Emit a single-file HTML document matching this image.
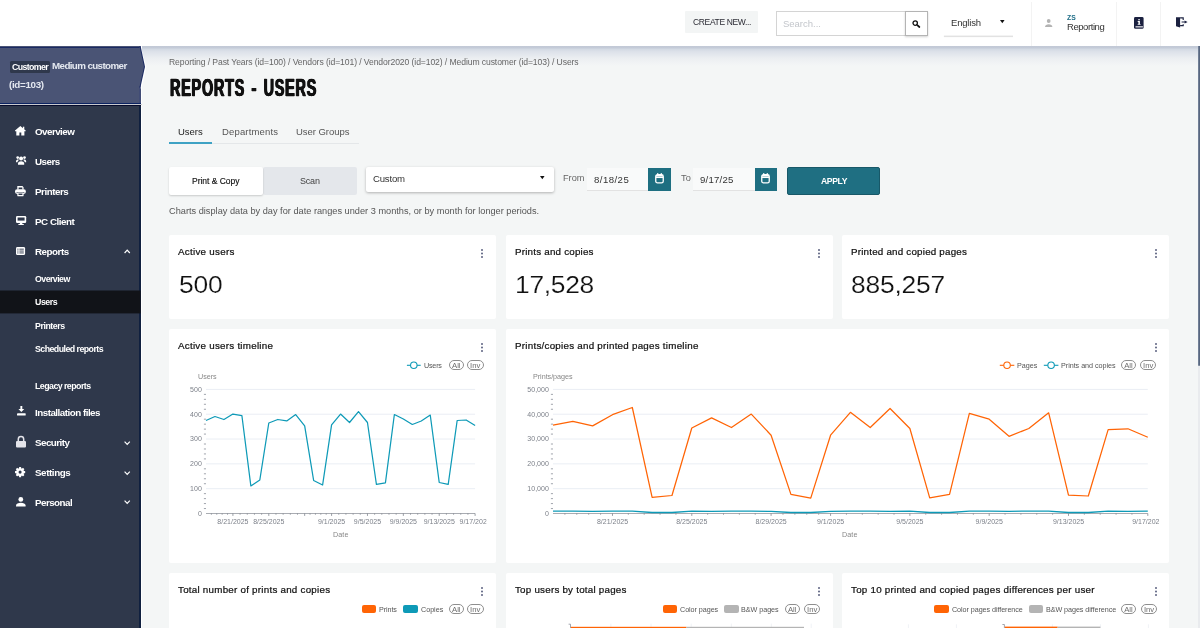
<!DOCTYPE html>
<html><head><meta charset="utf-8"><title>Reports - Users</title>
<style>
*{box-sizing:border-box;margin:0;padding:0}
html,body{width:1200px;height:628px;overflow:hidden;background:#f4f6f6;font-family:"Liberation Sans",sans-serif;color:#222}
.a{position:absolute}
.t{position:absolute;white-space:nowrap;z-index:10;will-change:transform}
.card{position:absolute;background:#fff;border-radius:2px}
.dots{position:absolute;width:2px;height:2px;background:#5c6280;border-radius:1px;box-shadow:0 3.55px 0 #5c6280,0 7.1px 0 #5c6280}
.pill{position:absolute;height:10.4px;border:.9px solid #8e8e8e;border-radius:5.2px;font-size:7.7px;line-height:9.4px;color:#6c6c6c;text-align:center;z-index:10;will-change:transform}
.sw{position:absolute;width:14.5px;height:8px;border-radius:2px}
svg{position:absolute;overflow:visible}
svg.c{will-change:transform}
</style></head><body>
<div class="a" style="left:0;top:45.7px;width:1200px;height:20px;background:linear-gradient(#c2c9d6 0,#c4cbd8 2px,#d2d9e3 3px,#dce1e9 5.5px,#e3e7ed 8.5px,#ebeef1 12px,#f0f2f4 16px,#f4f6f6 20px)"></div>
<div class="a" style="left:0;top:0;width:1200px;height:46px;background:#fff"></div>
<div class="a" style="left:684.8px;top:10.8px;width:73.6px;height:22.4px;background:#f3f5f5;border-radius:1px"></div>
<div class="a" style="left:776.2px;top:11px;width:130px;height:25px;border:1px solid #d4d4d4;background:#fff"></div>
<div class="a" style="left:905.4px;top:11px;width:23.1px;height:25px;border:1px solid #b4b4b4;background:#fff;box-shadow:0 1px 2px rgba(0,0,0,.18)"></div>
<svg style="left:911.6px;top:19.7px" width="8.4" height="7.8" viewBox="0 0 8.4 7.8"><circle cx="3.2" cy="3.1" r="2.2" fill="none" stroke="#111" stroke-width="1.3"/><path d="M5 4.9 L7.4 7" stroke="#111" stroke-width="1.7" stroke-linecap="round"/></svg>
<svg style="left:0;top:0" width="1200" height="46"><rect x="943.9" y="35.6" width="69.1" height="1.5" fill="#e2e2e2"/></svg>
<svg style="left:999.6px;top:20.2px" width="4.6" height="3.2" viewBox="0 0 4.6 3.2"><path d="M0 0h4.6L2.3 3.2z" fill="#111"/></svg>
<div class="a" style="left:1030.7px;top:2px;width:1px;height:44px;background:#f3f3f3"></div>
<div class="a" style="left:1116.1px;top:2px;width:1px;height:44px;background:#f3f3f3"></div>
<div class="a" style="left:1160.1px;top:2px;width:1px;height:44px;background:#f3f3f3"></div>
<svg style="left:1044.9px;top:19px" width="7.4" height="8" viewBox="0 0 7.4 8"><circle cx="3.7" cy="2" r="1.9" fill="#b3b3b3"/><path d="M0 8 C0 4.2 7.4 4.2 7.4 8Z" fill="#b3b3b3"/></svg>
<svg style="left:1133.7px;top:16.9px" width="9.6" height="11.8" viewBox="0 0 9.6 11.8"><rect width="9.6" height="11.8" rx="1.4" fill="#1b2140"/><rect x="1.5" y="9.3" width="7.4" height="1.1" fill="#fff"/><rect x="4.3" y="2.1" width="1.5" height="1.2" fill="#fff"/><path d="M3.7 4.1H5.9V7H6.5V7.8H3.7V7H4.4V4.9H3.7Z" fill="#fff"/></svg>
<svg style="left:1175.5px;top:17.3px" width="11.6" height="10.5" viewBox="0 0 11.6 10.5"><path d="M0 .3H4.1V10.5L0 9.3Z" fill="#1b2140"/><path d="M4.1 .9H7.2V2.9M4.1 8.6H7.2V7.2" fill="none" stroke="#1b2140" stroke-width="1.15"/><path d="M5.6 5H9.2" stroke="#1b2140" stroke-width="1"/><path d="M8.6 3.4L11.6 5 8.6 6.6Z" fill="#1b2140"/></svg>
<div class="a" style="left:0;top:46px;width:141.8px;height:582px;background:#fff"></div>
<div class="a" style="left:0;top:46px;width:140.6px;height:582px;background:#10203f"></div>
<div class="a" style="left:0;top:46px;width:139.3px;height:582px;background:#2f384b"></div>
<div class="a" style="left:0;top:46px;width:140.6px;height:57px;background:#414c76"></div>
<div class="a" style="left:0;top:46px;width:139.3px;height:57px;background:#4a5475"></div>
<div class="a" style="left:0;top:46.6px;width:140.6px;height:1px;background:#1a2a62"></div>
<div class="a" style="left:0;top:102.7px;width:140.6px;height:1.2px;background:#0c2361"></div>
<div class="a" style="left:0;top:103.9px;width:141.8px;height:1.5px;background:#c8c9ce"></div>
<div class="a" style="left:0;top:105.4px;width:140.6px;height:.8px;background:#070c2c"></div>
<svg style="left:0;top:0" width="150" height="110"><path d="M140.6 46L146.3 66.7 141.6 88.5H140.6Z" fill="#fff"/><path d="M139.3 46.6H140.7L145 66.7 140.4 87.4H139.3Z" fill="#1a2a62"/><path d="M139 47.6H139.8L144 66.7 139.6 86.4H139Z" fill="#4a5475"/></svg>
<div class="a" style="left:9.6px;top:60.6px;width:40.6px;height:12px;background:#2f384c;border-radius:1.5px"></div>
<svg style="left:0;top:0" width="150" height="628"><rect x="0" y="290.5" width="140.6" height="22.9" fill="#111318"/></svg>
<svg style="left:15.3px;top:125.8px" width="10.7" height="9.6" viewBox="0 0 10.7 9.6"><path d="M5.35 0L10.7 4.6V5.2H9.4V9.6H6.3V6.6H4.4V9.6H1.3V5.2H0V4.6Z" fill="#fff"/><rect x="7.9" y=".7" width="1.4" height="2.6" fill="#fff"/></svg>
<svg style="left:15.8px;top:156.3px" width="10.2" height="8.7" viewBox="0 0 10.2 8.7"><circle cx="5.1" cy="2.4" r="2" fill="#fff"/><path d="M2 8.7V7.6C2 4.6 8.2 4.6 8.2 7.6V8.7Z" fill="#fff"/><circle cx="1.7" cy="1.6" r="1.35" fill="#fff"/><circle cx="8.5" cy="1.6" r="1.35" fill="#fff"/><path d="M0 6.2V5.4C0 3.4 2.4 3.3 3 3.9C1.9 4.7 1.5 5.4 1.4 6.2Z" fill="#fff"/><path d="M10.2 6.2V5.4C10.2 3.4 7.8 3.3 7.2 3.9C8.3 4.7 8.7 5.4 8.8 6.2Z" fill="#fff"/></svg>
<svg style="left:14.5px;top:186.3px" width="10.9" height="10.2" viewBox="0 0 10.9 10.2"><path d="M2.3 0H7.4L8.6 1.2V3.4H7.3V1.4H3.6V3.4H2.3Z" fill="#fff"/><rect x="0" y="3.3" width="10.9" height="4.6" rx="2.1" fill="#fff"/><rect x="2.3" y="6.4" width="6.3" height="3.8" rx=".4" fill="#fff"/><rect x="3.5" y="7.3" width="3.9" height="1.7" fill="#2f384c"/><rect x="1.6" y="6.2" width="7.7" height=".9" fill="#2f384c"/><rect x="2.3" y="6.6" width="6.3" height=".8" fill="#fff"/></svg>
<svg style="left:15.8px;top:215.9px" width="10.2" height="9.1" viewBox="0 0 10.2 9.1"><rect x="0" y="0" width="10.2" height="7" rx="1.2" fill="#fff"/><rect x="1.6" y="1.5" width="7" height="3.1" fill="#2f384c"/><path d="M4 7H6.2L6.5 8.1H7.8V9.1H2.4V8.1H3.7Z" fill="#fff"/></svg>
<svg style="left:16.3px;top:246.9px" width="9.1" height="8.1" viewBox="0 0 9.1 8.1"><rect width="9.1" height="8.1" rx="1.4" fill="#fff"/><g fill="#2f384c"><rect x="1.3" y="1.7" width="1.2" height=".9"/><rect x="3.4" y="1.7" width="4.4" height=".9"/><rect x="1.3" y="3.6" width="1.2" height=".9"/><rect x="3.4" y="3.6" width="4.4" height=".9"/><rect x="1.3" y="5.5" width="1.2" height=".9"/><rect x="3.4" y="5.5" width="4.4" height=".9"/></g></svg>
<svg style="left:17.3px;top:406.3px" width="8.7" height="9.4" viewBox="0 0 8.7 9.4"><path d="M3.4 0H5.3V3H7.3L4.35 6 1.4 3H3.4Z" fill="#fff"/><rect x="0" y="7.2" width="8.7" height="2.2" rx=".5" fill="#fff"/></svg>
<svg style="left:16px;top:435.7px" width="10" height="11.5" viewBox="0 0 10 11.5"><path d="M2.3 5V3.3A2.7 2.7 0 0 1 7.7 3.3V5" fill="none" stroke="#e4e4ea" stroke-width="1.5"/><rect x="0" y="4.9" width="10" height="6.6" rx="1.1" fill="#e4e4ea"/></svg>
<svg style="left:15px;top:467px" width="10.2" height="10.2" viewBox="-5.1 -5.1 10.2 10.2"><circle r="3.9" fill="#fff"/><rect x="-1.05" y="-5.1" width="2.1" height="2.2" rx=".3" transform="rotate(0)" fill="#fff"/><rect x="-1.05" y="-5.1" width="2.1" height="2.2" rx=".3" transform="rotate(45)" fill="#fff"/><rect x="-1.05" y="-5.1" width="2.1" height="2.2" rx=".3" transform="rotate(90)" fill="#fff"/><rect x="-1.05" y="-5.1" width="2.1" height="2.2" rx=".3" transform="rotate(135)" fill="#fff"/><rect x="-1.05" y="-5.1" width="2.1" height="2.2" rx=".3" transform="rotate(180)" fill="#fff"/><rect x="-1.05" y="-5.1" width="2.1" height="2.2" rx=".3" transform="rotate(225)" fill="#fff"/><rect x="-1.05" y="-5.1" width="2.1" height="2.2" rx=".3" transform="rotate(270)" fill="#fff"/><rect x="-1.05" y="-5.1" width="2.1" height="2.2" rx=".3" transform="rotate(315)" fill="#fff"/><circle r="1.55" fill="#2f384c"/></svg>
<svg style="left:15.8px;top:496.8px" width="9.6" height="9.4" viewBox="0 0 9.6 9.4"><circle cx="4.8" cy="2.4" r="2.4" fill="#fff"/><path d="M0 9.4V8.4C0 4.9 9.6 4.9 9.6 8.4V9.4Z" fill="#fff"/></svg>
<svg style="left:123.9px;top:249.4px" width="6.4" height="4.6" viewBox="0 0 6.4 4.6"><path d="M.6 4L3.2 1.2 5.8 4" fill="none" stroke="#fff" stroke-width="1.2"/></svg>
<svg style="left:123.9px;top:440.5px" width="6.4" height="4.6" viewBox="0 0 6.4 4.6"><path d="M.6 .6L3.2 3.4 5.8 .6" fill="none" stroke="#fff" stroke-width="1.2"/></svg>
<svg style="left:123.9px;top:470.5px" width="6.4" height="4.6" viewBox="0 0 6.4 4.6"><path d="M.6 .6L3.2 3.4 5.8 .6" fill="none" stroke="#fff" stroke-width="1.2"/></svg>
<svg style="left:123.9px;top:500.3px" width="6.4" height="4.6" viewBox="0 0 6.4 4.6"><path d="M.6 .6L3.2 3.4 5.8 .6" fill="none" stroke="#fff" stroke-width="1.2"/></svg>
<div id="h1" class="a" style="will-change:transform;left:169.6px;top:74.6px;font-size:23.4px;line-height:26px;font-weight:bold;color:#111;white-space:nowrap;transform-origin:0 0;transform:scaleX(.613);letter-spacing:1.35px;word-spacing:2.6px;-webkit-text-stroke:.35px #111;text-shadow:.9px 0 0 #111,-.9px 0 0 #111,.45px 0 0 #111,-.45px 0 0 #111">REPORTS - USERS</div>
<div class="a" style="left:169px;top:142.6px;width:190px;height:1px;background:#e4e7e9"></div>
<div class="a" style="left:169px;top:142.3px;width:43.3px;height:1.3px;background:#3ea2c4"></div>
<div class="a" style="left:263px;top:167.3px;width:93.7px;height:28.2px;background:#e4e7eb;border-radius:2px"></div>
<div class="a" style="left:169px;top:167.3px;width:94.3px;height:28.2px;background:#fff;border-radius:2px;box-shadow:0 1px 2px rgba(0,0,0,.18)"></div>
<div class="a" style="left:366px;top:167.3px;width:188.3px;height:24.4px;background:#fff;border-radius:2px;box-shadow:0 1px 3px rgba(0,0,0,.28)"></div>
<svg style="left:540.3px;top:176px" width="4.6" height="3.2" viewBox="0 0 4.6 3.2"><path d="M0 0h4.6L2.3 3.2z" fill="#111"/></svg>
<div class="a" style="left:587.4px;top:168px;width:61px;height:22.6px;background:#f9fafa;border-bottom:1px solid #e2e2e2"></div>
<div class="a" style="left:648.4px;top:168px;width:22.6px;height:22.6px;background:#1e6f81"></div>
<div class="a" style="left:693px;top:168px;width:61.5px;height:22.6px;background:#f9fafa;border-bottom:1px solid #e2e2e2"></div>
<div class="a" style="left:754.5px;top:168px;width:22.2px;height:22.6px;background:#1f6f82"></div>
<svg style="left:655px;top:173.1px" width="9" height="10.6" viewBox="0 0 9 10.6"><rect x=".75" y="1.75" width="7.5" height="8.1" rx="1.7" fill="none" stroke="#fff" stroke-width="1.3"/><path d="M.8 4.4H8.2" stroke="#fff" stroke-width="1.3"/><rect x="1" y="2" width="7" height="1.6" fill="#fff"/><rect x="2" y="0" width="1.3" height="2.4" rx=".4" fill="#fff"/><rect x="5.7" y="0" width="1.3" height="2.4" rx=".4" fill="#fff"/></svg>
<svg style="left:761px;top:173.1px" width="9" height="10.6" viewBox="0 0 9 10.6"><rect x=".75" y="1.75" width="7.5" height="8.1" rx="1.7" fill="none" stroke="#fff" stroke-width="1.3"/><path d="M.8 4.4H8.2" stroke="#fff" stroke-width="1.3"/><rect x="1" y="2" width="7" height="1.6" fill="#fff"/><rect x="2" y="0" width="1.3" height="2.4" rx=".4" fill="#fff"/><rect x="5.7" y="0" width="1.3" height="2.4" rx=".4" fill="#fff"/></svg>
<div class="a" style="left:787px;top:167px;width:93.3px;height:28.2px;background:#1f6f82;border:1px solid #185868;border-radius:2px"></div>
<div class="card" style="left:169px;top:235px;width:327.3px;height:84px"></div>
<div class="card" style="left:505.6px;top:235px;width:327.5px;height:84px"></div>
<div class="card" style="left:842.4px;top:235px;width:327px;height:84px"></div>
<div class="card" style="left:169px;top:328.6px;width:327.3px;height:234px"></div>
<div class="card" style="left:505.6px;top:328.6px;width:663.8px;height:234px"></div>
<div class="card" style="left:169px;top:572.6px;width:327.3px;height:60px"></div>
<div class="card" style="left:505.6px;top:572.6px;width:327.5px;height:60px"></div>
<div class="card" style="left:842.4px;top:572.6px;width:327px;height:60px"></div>
<div class="dots" style="left:480.7px;top:248.7px"></div>
<div class="dots" style="left:817.7px;top:248.7px"></div>
<div class="dots" style="left:1154.5px;top:248.7px"></div>
<div class="dots" style="left:480.7px;top:343px"></div>
<div class="dots" style="left:1154.5px;top:343px"></div>
<div class="dots" style="left:480.7px;top:587px"></div>
<div class="dots" style="left:817.7px;top:587px"></div>
<div class="dots" style="left:1154.5px;top:587px"></div>
<div class="a" style="left:1197.7px;top:46px;width:2.3px;height:582px;background:#e9ebee"></div>
<div class="a" style="left:1197.7px;top:46px;width:2.3px;height:320px;background:linear-gradient(90deg,#7d8ba1,#4c5b75);border-radius:0 0 1px 1px"></div>
<div class="pill" style="left:448.7px;top:360.3px;width:14.600000000000023px">All</div>
<div class="pill" style="left:467.4px;top:360.3px;width:16.5px">Inv</div>
<div class="pill" style="left:1121px;top:360.3px;width:15px">All</div>
<div class="pill" style="left:1140.4px;top:360.3px;width:16.399999999999864px">Inv</div>
<div class="pill" style="left:448.7px;top:604.4px;width:14.600000000000023px">All</div>
<div class="pill" style="left:467.4px;top:604.4px;width:16.5px">Inv</div>
<div class="pill" style="left:785.3px;top:604.4px;width:14.5px">All</div>
<div class="pill" style="left:804px;top:604.4px;width:16.299999999999955px">Inv</div>
<div class="pill" style="left:1121.4px;top:604.4px;width:15.0px">All</div>
<div class="pill" style="left:1140.9px;top:604.4px;width:16.199999999999818px">Inv</div>
<div class="sw" style="left:361.8px;top:605.4px;background:#ff6405"></div>
<div class="sw" style="left:403.3px;top:605.4px;background:#0e9ab7"></div>
<div class="sw" style="left:662.9px;top:605.4px;background:#ff6405"></div>
<div class="sw" style="left:724.3px;top:605.4px;background:#b4b4b4"></div>
<div class="sw" style="left:934.2px;top:605.4px;background:#ff6405"></div>
<div class="sw" style="left:1028.5px;top:605.4px;background:#b4b4b4"></div>
<svg style="left:0;top:0" width="1200" height="628"><path d="M406.9 365.3H420.7" stroke="#0e9ab7" stroke-width="1.1"/><circle cx="413.79999999999995" cy="365.3" r="3.25" fill="#fff" stroke="#0e9ab7" stroke-width="1.1"/></svg>
<svg style="left:0;top:0" width="1200" height="628"><path d="M999.8 365.3H1014.3" stroke="#ff6405" stroke-width="1.1"/><circle cx="1007.05" cy="365.3" r="3.25" fill="#fff" stroke="#ff6405" stroke-width="1.1"/></svg>
<svg style="left:0;top:0" width="1200" height="628"><path d="M1043.8 365.3H1058.4" stroke="#0e9ab7" stroke-width="1.1"/><circle cx="1051.1" cy="365.3" r="3.25" fill="#fff" stroke="#0e9ab7" stroke-width="1.1"/></svg>
<svg class="c" style="left:0;top:0" width="1200" height="628"><clipPath id="c486"><rect x="0" y="0" width="486.6" height="628"/></clipPath><g><text transform="translate(201.80 515.80) scale(0.9 1)" text-anchor="end" font-size="7.8" fill="#7d818a" font-family="Liberation Sans">0</text></g><path d="M206 488.68H475.1" stroke="#eaeef4" stroke-width="1"/><g><text transform="translate(201.80 490.98) scale(0.9 1)" text-anchor="end" font-size="7.8" fill="#7d818a" font-family="Liberation Sans">100</text></g><path d="M206 463.86H475.1" stroke="#eaeef4" stroke-width="1"/><g><text transform="translate(201.80 466.16) scale(0.9 1)" text-anchor="end" font-size="7.8" fill="#7d818a" font-family="Liberation Sans">200</text></g><path d="M206 439.04H475.1" stroke="#eaeef4" stroke-width="1"/><g><text transform="translate(201.80 441.34) scale(0.9 1)" text-anchor="end" font-size="7.8" fill="#7d818a" font-family="Liberation Sans">300</text></g><path d="M206 414.22H475.1" stroke="#eaeef4" stroke-width="1"/><g><text transform="translate(201.80 416.52) scale(0.9 1)" text-anchor="end" font-size="7.8" fill="#7d818a" font-family="Liberation Sans">400</text></g><path d="M206 389.40H475.1" stroke="#eaeef4" stroke-width="1"/><g><text transform="translate(201.80 391.70) scale(0.9 1)" text-anchor="end" font-size="7.8" fill="#7d818a" font-family="Liberation Sans">500</text></g><path d="M203.9 508.54h2.1" stroke="#8a8f99" stroke-width=".8"/><path d="M203.9 503.57h2.1" stroke="#8a8f99" stroke-width=".8"/><path d="M203.9 498.61h2.1" stroke="#8a8f99" stroke-width=".8"/><path d="M203.9 493.64h2.1" stroke="#8a8f99" stroke-width=".8"/><path d="M203.9 483.72h2.1" stroke="#8a8f99" stroke-width=".8"/><path d="M203.9 478.75h2.1" stroke="#8a8f99" stroke-width=".8"/><path d="M203.9 473.79h2.1" stroke="#8a8f99" stroke-width=".8"/><path d="M203.9 468.82h2.1" stroke="#8a8f99" stroke-width=".8"/><path d="M203.9 458.90h2.1" stroke="#8a8f99" stroke-width=".8"/><path d="M203.9 453.93h2.1" stroke="#8a8f99" stroke-width=".8"/><path d="M203.9 448.97h2.1" stroke="#8a8f99" stroke-width=".8"/><path d="M203.9 444.00h2.1" stroke="#8a8f99" stroke-width=".8"/><path d="M203.9 434.08h2.1" stroke="#8a8f99" stroke-width=".8"/><path d="M203.9 429.11h2.1" stroke="#8a8f99" stroke-width=".8"/><path d="M203.9 424.15h2.1" stroke="#8a8f99" stroke-width=".8"/><path d="M203.9 419.18h2.1" stroke="#8a8f99" stroke-width=".8"/><path d="M203.9 409.26h2.1" stroke="#8a8f99" stroke-width=".8"/><path d="M203.9 404.29h2.1" stroke="#8a8f99" stroke-width=".8"/><path d="M203.9 399.33h2.1" stroke="#8a8f99" stroke-width=".8"/><path d="M203.9 394.36h2.1" stroke="#8a8f99" stroke-width=".8"/><path d="M206 513.5H475.1" stroke="#6f747e" stroke-width=".6"/><path d="M232.91 513.5v2.4" stroke="#6f747e" stroke-width=".7"/><path d="M211.38 513.5v1.2" stroke="#6f747e" stroke-width=".7"/><path d="M216.76 513.5v1.2" stroke="#6f747e" stroke-width=".7"/><path d="M222.15 513.5v1.2" stroke="#6f747e" stroke-width=".7"/><path d="M227.53 513.5v1.2" stroke="#6f747e" stroke-width=".7"/><g clip-path="url(#c486)"><text transform="translate(232.91 524.00) scale(0.9 1)" text-anchor="middle" font-size="7.8" fill="#7d818a" font-family="Liberation Sans">8/21/2025</text></g><path d="M268.79 513.5v2.4" stroke="#6f747e" stroke-width=".7"/><path d="M240.09 513.5v1.2" stroke="#6f747e" stroke-width=".7"/><path d="M247.26 513.5v1.2" stroke="#6f747e" stroke-width=".7"/><path d="M254.44 513.5v1.2" stroke="#6f747e" stroke-width=".7"/><path d="M261.61 513.5v1.2" stroke="#6f747e" stroke-width=".7"/><g clip-path="url(#c486)"><text transform="translate(268.79 524.00) scale(0.9 1)" text-anchor="middle" font-size="7.8" fill="#7d818a" font-family="Liberation Sans">8/25/2025</text></g><path d="M304.67 513.5v2.4" stroke="#6f747e" stroke-width=".7"/><path d="M275.97 513.5v1.2" stroke="#6f747e" stroke-width=".7"/><path d="M283.14 513.5v1.2" stroke="#6f747e" stroke-width=".7"/><path d="M290.32 513.5v1.2" stroke="#6f747e" stroke-width=".7"/><path d="M297.49 513.5v1.2" stroke="#6f747e" stroke-width=".7"/><path d="M331.58 513.5v2.4" stroke="#6f747e" stroke-width=".7"/><path d="M310.05 513.5v1.2" stroke="#6f747e" stroke-width=".7"/><path d="M315.43 513.5v1.2" stroke="#6f747e" stroke-width=".7"/><path d="M320.82 513.5v1.2" stroke="#6f747e" stroke-width=".7"/><path d="M326.20 513.5v1.2" stroke="#6f747e" stroke-width=".7"/><g clip-path="url(#c486)"><text transform="translate(331.58 524.00) scale(0.9 1)" text-anchor="middle" font-size="7.8" fill="#7d818a" font-family="Liberation Sans">9/1/2025</text></g><path d="M367.46 513.5v2.4" stroke="#6f747e" stroke-width=".7"/><path d="M338.76 513.5v1.2" stroke="#6f747e" stroke-width=".7"/><path d="M345.93 513.5v1.2" stroke="#6f747e" stroke-width=".7"/><path d="M353.11 513.5v1.2" stroke="#6f747e" stroke-width=".7"/><path d="M360.28 513.5v1.2" stroke="#6f747e" stroke-width=".7"/><g clip-path="url(#c486)"><text transform="translate(367.46 524.00) scale(0.9 1)" text-anchor="middle" font-size="7.8" fill="#7d818a" font-family="Liberation Sans">9/5/2025</text></g><path d="M403.34 513.5v2.4" stroke="#6f747e" stroke-width=".7"/><path d="M374.64 513.5v1.2" stroke="#6f747e" stroke-width=".7"/><path d="M381.81 513.5v1.2" stroke="#6f747e" stroke-width=".7"/><path d="M388.99 513.5v1.2" stroke="#6f747e" stroke-width=".7"/><path d="M396.16 513.5v1.2" stroke="#6f747e" stroke-width=".7"/><g clip-path="url(#c486)"><text transform="translate(403.34 524.00) scale(0.9 1)" text-anchor="middle" font-size="7.8" fill="#7d818a" font-family="Liberation Sans">9/9/2025</text></g><path d="M439.22 513.5v2.4" stroke="#6f747e" stroke-width=".7"/><path d="M410.52 513.5v1.2" stroke="#6f747e" stroke-width=".7"/><path d="M417.69 513.5v1.2" stroke="#6f747e" stroke-width=".7"/><path d="M424.87 513.5v1.2" stroke="#6f747e" stroke-width=".7"/><path d="M432.04 513.5v1.2" stroke="#6f747e" stroke-width=".7"/><g clip-path="url(#c486)"><text transform="translate(439.22 524.00) scale(0.9 1)" text-anchor="middle" font-size="7.8" fill="#7d818a" font-family="Liberation Sans">9/13/2025</text></g><path d="M475.10 513.5v2.4" stroke="#6f747e" stroke-width=".7"/><path d="M446.40 513.5v1.2" stroke="#6f747e" stroke-width=".7"/><path d="M453.57 513.5v1.2" stroke="#6f747e" stroke-width=".7"/><path d="M460.75 513.5v1.2" stroke="#6f747e" stroke-width=".7"/><path d="M467.92 513.5v1.2" stroke="#6f747e" stroke-width=".7"/><g clip-path="url(#c486)"><text transform="translate(475.10 524.00) scale(0.9 1)" text-anchor="middle" font-size="7.8" fill="#7d818a" font-family="Liberation Sans">9/17/2025</text></g><path d="M206.00 420.50 L214.97 416.53 L223.94 419.50 L232.91 414.05 L241.88 415.54 L250.85 485.97 L259.82 480.02 L268.79 422.98 L277.76 419.50 L286.73 420.99 L295.70 414.54 L304.67 425.95 L313.64 480.51 L322.61 484.98 L331.58 424.96 L340.55 414.05 L349.52 422.48 L358.49 411.57 L367.46 422.48 L376.43 484.48 L385.40 482.99 L394.37 414.54 L403.34 419.01 L412.31 424.46 L421.28 420.99 L430.25 415.04 L439.22 482.50 L448.19 484.48 L457.16 420.50 L466.13 420.00 L475.10 425.46" fill="none" stroke="#0e9ab7" stroke-width="1.25" stroke-linejoin="round"/></svg>
<svg class="c" style="left:0;top:0" width="1200" height="628"><clipPath id="c1159"><rect x="0" y="0" width="1159.2" height="628"/></clipPath><g><text transform="translate(548.80 515.80) scale(0.9 1)" text-anchor="end" font-size="7.8" fill="#7d818a" font-family="Liberation Sans">0</text></g><path d="M553 488.68H1147.8" stroke="#eaeef4" stroke-width="1"/><g><text transform="translate(548.80 490.98) scale(0.9 1)" text-anchor="end" font-size="7.8" fill="#7d818a" font-family="Liberation Sans">10,000</text></g><path d="M553 463.86H1147.8" stroke="#eaeef4" stroke-width="1"/><g><text transform="translate(548.80 466.16) scale(0.9 1)" text-anchor="end" font-size="7.8" fill="#7d818a" font-family="Liberation Sans">20,000</text></g><path d="M553 439.04H1147.8" stroke="#eaeef4" stroke-width="1"/><g><text transform="translate(548.80 441.34) scale(0.9 1)" text-anchor="end" font-size="7.8" fill="#7d818a" font-family="Liberation Sans">30,000</text></g><path d="M553 414.22H1147.8" stroke="#eaeef4" stroke-width="1"/><g><text transform="translate(548.80 416.52) scale(0.9 1)" text-anchor="end" font-size="7.8" fill="#7d818a" font-family="Liberation Sans">40,000</text></g><path d="M553 389.40H1147.8" stroke="#eaeef4" stroke-width="1"/><g><text transform="translate(548.80 391.70) scale(0.9 1)" text-anchor="end" font-size="7.8" fill="#7d818a" font-family="Liberation Sans">50,000</text></g><path d="M550.9 508.54h2.1" stroke="#8a8f99" stroke-width=".8"/><path d="M550.9 503.57h2.1" stroke="#8a8f99" stroke-width=".8"/><path d="M550.9 498.61h2.1" stroke="#8a8f99" stroke-width=".8"/><path d="M550.9 493.64h2.1" stroke="#8a8f99" stroke-width=".8"/><path d="M550.9 483.72h2.1" stroke="#8a8f99" stroke-width=".8"/><path d="M550.9 478.75h2.1" stroke="#8a8f99" stroke-width=".8"/><path d="M550.9 473.79h2.1" stroke="#8a8f99" stroke-width=".8"/><path d="M550.9 468.82h2.1" stroke="#8a8f99" stroke-width=".8"/><path d="M550.9 458.90h2.1" stroke="#8a8f99" stroke-width=".8"/><path d="M550.9 453.93h2.1" stroke="#8a8f99" stroke-width=".8"/><path d="M550.9 448.97h2.1" stroke="#8a8f99" stroke-width=".8"/><path d="M550.9 444.00h2.1" stroke="#8a8f99" stroke-width=".8"/><path d="M550.9 434.08h2.1" stroke="#8a8f99" stroke-width=".8"/><path d="M550.9 429.11h2.1" stroke="#8a8f99" stroke-width=".8"/><path d="M550.9 424.15h2.1" stroke="#8a8f99" stroke-width=".8"/><path d="M550.9 419.18h2.1" stroke="#8a8f99" stroke-width=".8"/><path d="M550.9 409.26h2.1" stroke="#8a8f99" stroke-width=".8"/><path d="M550.9 404.29h2.1" stroke="#8a8f99" stroke-width=".8"/><path d="M550.9 399.33h2.1" stroke="#8a8f99" stroke-width=".8"/><path d="M550.9 394.36h2.1" stroke="#8a8f99" stroke-width=".8"/><path d="M553 513.5H1147.8" stroke="#6f747e" stroke-width=".6"/><path d="M612.48 513.5v2.4" stroke="#6f747e" stroke-width=".7"/><path d="M564.90 513.5v1.2" stroke="#6f747e" stroke-width=".7"/><path d="M576.79 513.5v1.2" stroke="#6f747e" stroke-width=".7"/><path d="M588.69 513.5v1.2" stroke="#6f747e" stroke-width=".7"/><path d="M600.58 513.5v1.2" stroke="#6f747e" stroke-width=".7"/><g clip-path="url(#c1159)"><text transform="translate(612.48 524.00) scale(0.9 1)" text-anchor="middle" font-size="7.8" fill="#7d818a" font-family="Liberation Sans">8/21/2025</text></g><path d="M691.79 513.5v2.4" stroke="#6f747e" stroke-width=".7"/><path d="M628.34 513.5v1.2" stroke="#6f747e" stroke-width=".7"/><path d="M644.20 513.5v1.2" stroke="#6f747e" stroke-width=".7"/><path d="M660.06 513.5v1.2" stroke="#6f747e" stroke-width=".7"/><path d="M675.93 513.5v1.2" stroke="#6f747e" stroke-width=".7"/><g clip-path="url(#c1159)"><text transform="translate(691.79 524.00) scale(0.9 1)" text-anchor="middle" font-size="7.8" fill="#7d818a" font-family="Liberation Sans">8/25/2025</text></g><path d="M771.09 513.5v2.4" stroke="#6f747e" stroke-width=".7"/><path d="M707.65 513.5v1.2" stroke="#6f747e" stroke-width=".7"/><path d="M723.51 513.5v1.2" stroke="#6f747e" stroke-width=".7"/><path d="M739.37 513.5v1.2" stroke="#6f747e" stroke-width=".7"/><path d="M755.23 513.5v1.2" stroke="#6f747e" stroke-width=".7"/><g clip-path="url(#c1159)"><text transform="translate(771.09 524.00) scale(0.9 1)" text-anchor="middle" font-size="7.8" fill="#7d818a" font-family="Liberation Sans">8/29/2025</text></g><path d="M830.57 513.5v2.4" stroke="#6f747e" stroke-width=".7"/><path d="M782.99 513.5v1.2" stroke="#6f747e" stroke-width=".7"/><path d="M794.89 513.5v1.2" stroke="#6f747e" stroke-width=".7"/><path d="M806.78 513.5v1.2" stroke="#6f747e" stroke-width=".7"/><path d="M818.68 513.5v1.2" stroke="#6f747e" stroke-width=".7"/><g clip-path="url(#c1159)"><text transform="translate(830.57 524.00) scale(0.9 1)" text-anchor="middle" font-size="7.8" fill="#7d818a" font-family="Liberation Sans">9/1/2025</text></g><path d="M909.88 513.5v2.4" stroke="#6f747e" stroke-width=".7"/><path d="M846.43 513.5v1.2" stroke="#6f747e" stroke-width=".7"/><path d="M862.30 513.5v1.2" stroke="#6f747e" stroke-width=".7"/><path d="M878.16 513.5v1.2" stroke="#6f747e" stroke-width=".7"/><path d="M894.02 513.5v1.2" stroke="#6f747e" stroke-width=".7"/><g clip-path="url(#c1159)"><text transform="translate(909.88 524.00) scale(0.9 1)" text-anchor="middle" font-size="7.8" fill="#7d818a" font-family="Liberation Sans">9/5/2025</text></g><path d="M989.19 513.5v2.4" stroke="#6f747e" stroke-width=".7"/><path d="M925.74 513.5v1.2" stroke="#6f747e" stroke-width=".7"/><path d="M941.60 513.5v1.2" stroke="#6f747e" stroke-width=".7"/><path d="M957.46 513.5v1.2" stroke="#6f747e" stroke-width=".7"/><path d="M973.33 513.5v1.2" stroke="#6f747e" stroke-width=".7"/><g clip-path="url(#c1159)"><text transform="translate(989.19 524.00) scale(0.9 1)" text-anchor="middle" font-size="7.8" fill="#7d818a" font-family="Liberation Sans">9/9/2025</text></g><path d="M1068.49 513.5v2.4" stroke="#6f747e" stroke-width=".7"/><path d="M1005.05 513.5v1.2" stroke="#6f747e" stroke-width=".7"/><path d="M1020.91 513.5v1.2" stroke="#6f747e" stroke-width=".7"/><path d="M1036.77 513.5v1.2" stroke="#6f747e" stroke-width=".7"/><path d="M1052.63 513.5v1.2" stroke="#6f747e" stroke-width=".7"/><g clip-path="url(#c1159)"><text transform="translate(1068.49 524.00) scale(0.9 1)" text-anchor="middle" font-size="7.8" fill="#7d818a" font-family="Liberation Sans">9/13/2025</text></g><path d="M1147.80 513.5v2.4" stroke="#6f747e" stroke-width=".7"/><path d="M1084.35 513.5v1.2" stroke="#6f747e" stroke-width=".7"/><path d="M1100.22 513.5v1.2" stroke="#6f747e" stroke-width=".7"/><path d="M1116.08 513.5v1.2" stroke="#6f747e" stroke-width=".7"/><path d="M1131.94 513.5v1.2" stroke="#6f747e" stroke-width=".7"/><g clip-path="url(#c1159)"><text transform="translate(1147.80 524.00) scale(0.9 1)" text-anchor="middle" font-size="7.8" fill="#7d818a" font-family="Liberation Sans">9/17/2025</text></g><path d="M553.00 511.05 L572.83 511.20 L592.65 511.35 L612.48 511.05 L632.31 511.20 L652.13 512.50 L671.96 512.50 L691.79 511.20 L711.61 511.35 L731.44 511.05 L751.27 511.20 L771.09 511.35 L790.92 512.50 L810.75 512.50 L830.57 511.35 L850.40 511.05 L870.23 511.20 L890.05 511.35 L909.88 511.05 L929.71 512.50 L949.53 512.50 L969.36 511.05 L989.19 511.20 L1009.01 511.35 L1028.84 511.05 L1048.67 511.20 L1068.49 512.50 L1088.32 512.50 L1108.15 511.20 L1127.97 511.35 L1147.80 511.05" fill="none" stroke="#0e9ab7" stroke-width="1.3" stroke-linejoin="round"/><path d="M553.00 425.07 L572.83 421.30 L592.65 425.90 L612.48 414.70 L632.31 407.50 L652.13 497.30 L671.96 495.50 L691.79 428.00 L711.61 417.90 L731.44 427.50 L751.27 414.10 L771.09 435.20 L790.92 494.40 L810.75 498.10 L830.57 435.20 L850.40 412.30 L870.23 427.50 L890.05 408.50 L909.88 428.50 L929.71 497.90 L949.53 494.40 L969.36 413.30 L989.19 419.20 L1009.01 436.30 L1028.84 428.50 L1048.67 412.80 L1068.49 495.20 L1088.32 496.00 L1108.15 429.60 L1127.97 428.80 L1147.80 437.30" fill="none" stroke="#ff6405" stroke-width="1.25" stroke-linejoin="round"/></svg>
<svg style="left:0;top:0" width="1200" height="628"><path d="M610.9 623.6V628" stroke="#f0f2f6" stroke-width="1"/><path d="M651 623.6V628" stroke="#f0f2f6" stroke-width="1"/><path d="M691.2 623.6V628" stroke="#f0f2f6" stroke-width="1"/><path d="M731.3 623.6V628" stroke="#f0f2f6" stroke-width="1"/><path d="M771.3 623.6V628" stroke="#f0f2f6" stroke-width="1"/><path d="M811.2 623.6V628" stroke="#f0f2f6" stroke-width="1"/><path d="M568.6 624.2H570.5V628" stroke="#8a8f99" stroke-width=".8" fill="none"/><rect x="570.9" y="626.8" width="115.6" height="2" fill="#ff6405"/><rect x="686.5" y="626.8" width="117.5" height="2" fill="#b4b4b4"/><path d="M908.4 624.3V628" stroke="#f0f2f6" stroke-width="1"/><path d="M956.4 624.3V628" stroke="#f0f2f6" stroke-width="1"/><path d="M1052.4 624.3V628" stroke="#f0f2f6" stroke-width="1"/><path d="M1100.4 624.3V628" stroke="#f0f2f6" stroke-width="1"/><path d="M1148.4 624.3V628" stroke="#f0f2f6" stroke-width="1"/><path d="M1002.4 624.5H1004.4V628" stroke="#8a8f99" stroke-width=".8" fill="none"/><rect x="1004.8" y="626.6" width="52.8" height="1.4" fill="#ff6405"/><rect x="1057.6" y="626.6" width="42.8" height="1.4" fill="#b4b4b4"/></svg>
<div class="t" style="left:692.59px;top:16.30px;line-height:12px;font-size:8.5px;font-weight:normal;color:#2a2a33;letter-spacing:-0.357px;">CREATE NEW...</div>
<div class="t" style="left:783.14px;top:16.90px;line-height:13px;font-size:9.5px;font-weight:normal;color:#c3c6cb;letter-spacing:-0.016px;">Search...</div>
<div class="t" style="left:950.84px;top:15.90px;line-height:13px;font-size:9.5px;font-weight:normal;color:#333;letter-spacing:-0.184px;">English</div>
<div class="t" style="left:1067.27px;top:13.20px;line-height:10px;font-size:6.8px;font-weight:bold;color:#1d6c86;letter-spacing:0.101px;">ZS</div>
<div class="t" style="left:1066.94px;top:20.30px;line-height:13px;font-size:9.5px;font-weight:normal;color:#333;letter-spacing:-0.435px;">Reporting</div>
<div class="t" style="left:11.78px;top:60.60px;line-height:12px;font-size:8.8px;font-weight:bold;color:#fff;letter-spacing:-0.629px;">Customer</div>
<div class="t" style="left:52.23px;top:59.30px;line-height:14px;font-size:9.8px;font-weight:bold;color:#e4e8f0;letter-spacing:-0.616px;">Medium customer</div>
<div class="t" style="left:9.23px;top:77.60px;line-height:14px;font-size:9.8px;font-weight:bold;color:#e4e8f0;letter-spacing:-0.313px;">(id=103)</div>
<div class="t" style="left:34.93px;top:124.60px;line-height:14px;font-size:9.8px;font-weight:bold;color:#fff;letter-spacing:-0.534px;">Overview</div>
<div class="t" style="left:34.93px;top:154.60px;line-height:14px;font-size:9.8px;font-weight:bold;color:#fff;letter-spacing:-0.526px;">Users</div>
<div class="t" style="left:34.93px;top:185.20px;line-height:14px;font-size:9.8px;font-weight:bold;color:#fff;letter-spacing:-0.478px;">Printers</div>
<div class="t" style="left:34.93px;top:215.00px;line-height:14px;font-size:9.8px;font-weight:bold;color:#fff;letter-spacing:-0.471px;">PC Client</div>
<div class="t" style="left:34.93px;top:245.00px;line-height:14px;font-size:9.8px;font-weight:bold;color:#fff;letter-spacing:-0.475px;">Reports</div>
<div class="t" style="left:34.93px;top:405.70px;line-height:14px;font-size:9.8px;font-weight:bold;color:#fff;letter-spacing:-0.502px;">Installation files</div>
<div class="t" style="left:34.93px;top:436.10px;line-height:14px;font-size:9.8px;font-weight:bold;color:#fff;letter-spacing:-0.521px;">Security</div>
<div class="t" style="left:34.93px;top:465.90px;line-height:14px;font-size:9.8px;font-weight:bold;color:#fff;letter-spacing:-0.419px;">Settings</div>
<div class="t" style="left:34.93px;top:496.10px;line-height:14px;font-size:9.8px;font-weight:bold;color:#fff;letter-spacing:-0.536px;">Personal</div>
<div class="t" style="left:34.98px;top:272.80px;line-height:12px;font-size:8.8px;font-weight:bold;color:#fff;letter-spacing:-0.549px;">Overview</div>
<div class="t" style="left:34.98px;top:296.00px;line-height:12px;font-size:8.8px;font-weight:bold;color:#fff;letter-spacing:-0.447px;">Users</div>
<div class="t" style="left:34.98px;top:319.60px;line-height:12px;font-size:8.8px;font-weight:bold;color:#fff;letter-spacing:-0.452px;">Printers</div>
<div class="t" style="left:34.98px;top:343.00px;line-height:12px;font-size:8.8px;font-weight:bold;color:#fff;letter-spacing:-0.542px;">Scheduled reports</div>
<div class="t" style="left:34.98px;top:380.20px;line-height:12px;font-size:8.8px;font-weight:bold;color:#fff;letter-spacing:-0.539px;">Legacy reports</div>
<div class="t" style="left:168.89px;top:55.60px;line-height:12px;font-size:8.6px;font-weight:normal;color:#666;letter-spacing:-0.092px;">Reporting / Past Years (id=100) / Vendors (id=101) / Vendor2020 (id=102) / Medium customer (id=103) / Users</div>
<div class="t" style="left:178.04px;top:125.40px;line-height:13px;font-size:9.5px;font-weight:normal;color:#222;letter-spacing:-0.026px;">Users</div>
<div class="t" style="left:221.54px;top:125.40px;line-height:13px;font-size:9.5px;font-weight:normal;color:#555;letter-spacing:0.163px;">Departments</div>
<div class="t" style="left:296.34px;top:125.40px;line-height:13px;font-size:9.5px;font-weight:normal;color:#555;letter-spacing:-0.043px;">User Groups</div>
<div class="t" style="left:192.29px;top:175.00px;line-height:12px;font-size:8.5px;font-weight:normal;color:#111;letter-spacing:-0.026px;-webkit-text-stroke:.15px #111;">Print &amp; Copy</div>
<div class="t" style="left:299.77px;top:175.30px;line-height:13px;font-size:9px;font-weight:normal;color:#444;letter-spacing:-0.192px;">Scan</div>
<div class="t" style="left:373.34px;top:172.40px;line-height:13px;font-size:9.6px;font-weight:normal;color:#333;letter-spacing:-0.195px;">Custom</div>
<div class="t" style="left:563.26px;top:171.80px;line-height:13px;font-size:9.2px;font-weight:normal;color:#666;letter-spacing:0.006px;">From</div>
<div class="t" style="left:594.14px;top:172.80px;line-height:13px;font-size:9.6px;font-weight:normal;color:#333;letter-spacing:0.454px;">8/18/25</div>
<div class="t" style="left:680.56px;top:171.80px;line-height:13px;font-size:9.2px;font-weight:normal;color:#666;letter-spacing:0.230px;">To</div>
<div class="t" style="left:700.24px;top:172.80px;line-height:13px;font-size:9.6px;font-weight:normal;color:#333;letter-spacing:0.211px;">9/17/25</div>
<div class="t" style="left:820.59px;top:175.30px;line-height:12px;font-size:8.6px;font-weight:bold;color:#fff;letter-spacing:-0.351px;">APPLY</div>
<div class="t" style="left:168.86px;top:205.00px;line-height:13px;font-size:9.2px;font-weight:normal;color:#555;letter-spacing:0.010px;">Charts display data by day for date ranges under 3 months, or by month for longer periods.</div>
<div class="t" style="left:178.23px;top:245.00px;line-height:14px;font-size:9.8px;font-weight:normal;color:#111;letter-spacing:0.279px;-webkit-text-stroke:.22px #111;">Active users</div>
<div class="t" style="left:179.23px;top:269.30px;line-height:32px;font-size:23.2px;font-weight:normal;color:#111;letter-spacing:-0.205px;-webkit-text-stroke:.2px #fff;transform-origin:0 0;transform:scaleX(1.14);">500</div>
<div class="t" style="left:514.63px;top:245.00px;line-height:14px;font-size:9.8px;font-weight:normal;color:#111;letter-spacing:0.209px;-webkit-text-stroke:.22px #111;">Prints and copies</div>
<div class="t" style="left:515.33px;top:269.30px;line-height:32px;font-size:23.2px;font-weight:normal;color:#111;letter-spacing:-0.270px;-webkit-text-stroke:.2px #fff;transform-origin:0 0;transform:scaleX(1.14);">17,528</div>
<div class="t" style="left:851.13px;top:245.00px;line-height:14px;font-size:9.8px;font-weight:normal;color:#111;letter-spacing:0.208px;-webkit-text-stroke:.22px #111;">Printed and copied pages</div>
<div class="t" style="left:851.43px;top:269.30px;line-height:32px;font-size:23.2px;font-weight:normal;color:#111;letter-spacing:-0.183px;-webkit-text-stroke:.2px #fff;transform-origin:0 0;transform:scaleX(1.14);">885,257</div>
<div class="t" style="left:178.23px;top:338.90px;line-height:14px;font-size:9.8px;font-weight:normal;color:#111;letter-spacing:0.255px;-webkit-text-stroke:.22px #111;">Active users timeline</div>
<div class="t" style="left:514.63px;top:338.90px;line-height:14px;font-size:9.8px;font-weight:normal;color:#111;letter-spacing:0.247px;-webkit-text-stroke:.22px #111;">Prints/copies and printed pages timeline</div>
<div class="t" style="left:178.23px;top:583.20px;line-height:14px;font-size:9.8px;font-weight:normal;color:#111;letter-spacing:0.242px;-webkit-text-stroke:.22px #111;">Total number of prints and copies</div>
<div class="t" style="left:514.63px;top:583.20px;line-height:14px;font-size:9.8px;font-weight:normal;color:#111;letter-spacing:0.225px;-webkit-text-stroke:.22px #111;">Top users by total pages</div>
<div class="t" style="left:851.13px;top:583.20px;line-height:14px;font-size:9.8px;font-weight:normal;color:#111;letter-spacing:0.239px;-webkit-text-stroke:.22px #111;">Top 10 printed and copied pages differences per user</div>
<div class="t" style="left:424.45px;top:360.80px;line-height:10px;font-size:7.2px;font-weight:normal;color:#555;letter-spacing:-0.213px;">Users</div>
<div class="t" style="left:1016.85px;top:360.80px;line-height:10px;font-size:7.2px;font-weight:normal;color:#555;letter-spacing:-0.014px;">Pages</div>
<div class="t" style="left:1060.85px;top:360.80px;line-height:10px;font-size:7.2px;font-weight:normal;color:#555;letter-spacing:-0.031px;">Prints and copies</div>
<div class="t" style="left:379.35px;top:605.00px;line-height:10px;font-size:7.2px;font-weight:normal;color:#555;letter-spacing:-0.093px;">Prints</div>
<div class="t" style="left:420.55px;top:605.00px;line-height:10px;font-size:7.2px;font-weight:normal;color:#555;letter-spacing:-0.026px;">Copies</div>
<div class="t" style="left:680.15px;top:605.00px;line-height:10px;font-size:7.2px;font-weight:normal;color:#555;letter-spacing:-0.059px;">Color pages</div>
<div class="t" style="left:741.45px;top:605.00px;line-height:10px;font-size:7.2px;font-weight:normal;color:#555;letter-spacing:-0.037px;">B&amp;W pages</div>
<div class="t" style="left:951.55px;top:605.00px;line-height:10px;font-size:7.2px;font-weight:normal;color:#555;letter-spacing:-0.067px;">Color pages difference</div>
<div class="t" style="left:1045.75px;top:605.00px;line-height:10px;font-size:7.2px;font-weight:normal;color:#555;letter-spacing:-0.064px;">B&amp;W pages difference</div>
<div class="t" style="left:197.55px;top:371.70px;line-height:10px;font-size:7.2px;font-weight:normal;color:#888;letter-spacing:-0.033px;">Users</div>
<div class="t" style="left:532.95px;top:371.70px;line-height:10px;font-size:7.2px;font-weight:normal;color:#888;letter-spacing:-0.036px;">Prints/pages</div>
<div class="t" style="left:332.85px;top:529.50px;line-height:10px;font-size:7.2px;font-weight:normal;color:#888;letter-spacing:0.083px;">Date</div>
<div class="t" style="left:841.95px;top:529.50px;line-height:10px;font-size:7.2px;font-weight:normal;color:#888;letter-spacing:0.083px;">Date</div>
</body></html>
